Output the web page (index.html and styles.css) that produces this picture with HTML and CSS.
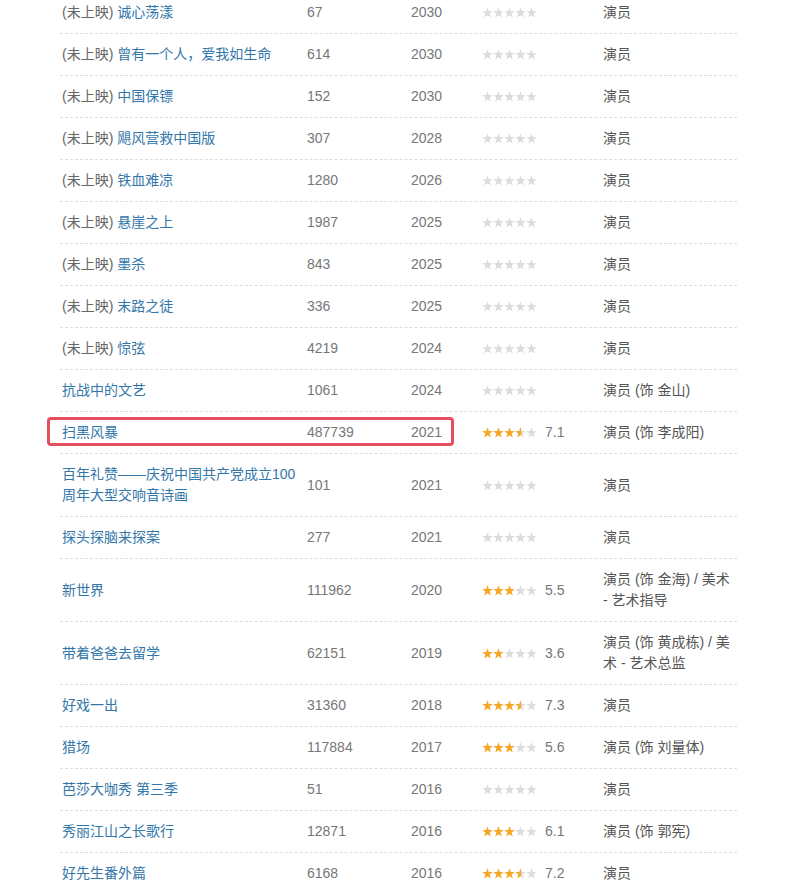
FILE: index.html
```html
<!DOCTYPE html>
<html lang="zh-CN">
<head>
<meta charset="utf-8">
<title>作品列表</title>
<link rel="stylesheet" href="styles.css">
</head>
<body>
<svg class="defs" width="0" height="0" aria-hidden="true">
  <defs>
    <symbol id="star" viewBox="0 0 11 11">
      <polygon points="5.5,0.3 6.8,4.1 10.8,4.2 7.6,6.6 8.8,10.5 5.5,8.2 2.2,10.5 3.4,6.6 0.2,4.2 4.2,4.1"/>
    </symbol>
    <linearGradient id="half" x1="0" x2="1" y1="0" y2="0">
      <stop offset="0.5" stop-color="#f6a623"/>
      <stop offset="0.5" stop-color="#dcdcdc"/>
    </linearGradient>
  </defs>
</svg>

<div class="works">
  <div class="row">
    <div class="c-title"><span class="pre">(未上映)</span> <a href="#">诚心荡漾</a></div>
    <div class="c-num">67</div><div class="c-year">2030</div>
    <div class="c-rate"><svg class="stars" width="55" height="11"><use href="#star" x="0" width="11" height="11" class="off"/><use href="#star" x="11" width="11" height="11" class="off"/><use href="#star" x="22" width="11" height="11" class="off"/><use href="#star" x="33" width="11" height="11" class="off"/><use href="#star" x="44" width="11" height="11" class="off"/></svg></div>
    <div class="c-role">演员</div>
  </div>
  <div class="row">
    <div class="c-title"><span class="pre">(未上映)</span> <a href="#">曾有一个人，爱我如生命</a></div>
    <div class="c-num">614</div><div class="c-year">2030</div>
    <div class="c-rate"><svg class="stars" width="55" height="11"><use href="#star" x="0" width="11" height="11" class="off"/><use href="#star" x="11" width="11" height="11" class="off"/><use href="#star" x="22" width="11" height="11" class="off"/><use href="#star" x="33" width="11" height="11" class="off"/><use href="#star" x="44" width="11" height="11" class="off"/></svg></div>
    <div class="c-role">演员</div>
  </div>
  <div class="row">
    <div class="c-title"><span class="pre">(未上映)</span> <a href="#">中国保镖</a></div>
    <div class="c-num">152</div><div class="c-year">2030</div>
    <div class="c-rate"><svg class="stars" width="55" height="11"><use href="#star" x="0" width="11" height="11" class="off"/><use href="#star" x="11" width="11" height="11" class="off"/><use href="#star" x="22" width="11" height="11" class="off"/><use href="#star" x="33" width="11" height="11" class="off"/><use href="#star" x="44" width="11" height="11" class="off"/></svg></div>
    <div class="c-role">演员</div>
  </div>
  <div class="row">
    <div class="c-title"><span class="pre">(未上映)</span> <a href="#">飓风营救中国版</a></div>
    <div class="c-num">307</div><div class="c-year">2028</div>
    <div class="c-rate"><svg class="stars" width="55" height="11"><use href="#star" x="0" width="11" height="11" class="off"/><use href="#star" x="11" width="11" height="11" class="off"/><use href="#star" x="22" width="11" height="11" class="off"/><use href="#star" x="33" width="11" height="11" class="off"/><use href="#star" x="44" width="11" height="11" class="off"/></svg></div>
    <div class="c-role">演员</div>
  </div>
  <div class="row">
    <div class="c-title"><span class="pre">(未上映)</span> <a href="#">铁血难凉</a></div>
    <div class="c-num">1280</div><div class="c-year">2026</div>
    <div class="c-rate"><svg class="stars" width="55" height="11"><use href="#star" x="0" width="11" height="11" class="off"/><use href="#star" x="11" width="11" height="11" class="off"/><use href="#star" x="22" width="11" height="11" class="off"/><use href="#star" x="33" width="11" height="11" class="off"/><use href="#star" x="44" width="11" height="11" class="off"/></svg></div>
    <div class="c-role">演员</div>
  </div>
  <div class="row">
    <div class="c-title"><span class="pre">(未上映)</span> <a href="#">悬崖之上</a></div>
    <div class="c-num">1987</div><div class="c-year">2025</div>
    <div class="c-rate"><svg class="stars" width="55" height="11"><use href="#star" x="0" width="11" height="11" class="off"/><use href="#star" x="11" width="11" height="11" class="off"/><use href="#star" x="22" width="11" height="11" class="off"/><use href="#star" x="33" width="11" height="11" class="off"/><use href="#star" x="44" width="11" height="11" class="off"/></svg></div>
    <div class="c-role">演员</div>
  </div>
  <div class="row">
    <div class="c-title"><span class="pre">(未上映)</span> <a href="#">墨杀</a></div>
    <div class="c-num">843</div><div class="c-year">2025</div>
    <div class="c-rate"><svg class="stars" width="55" height="11"><use href="#star" x="0" width="11" height="11" class="off"/><use href="#star" x="11" width="11" height="11" class="off"/><use href="#star" x="22" width="11" height="11" class="off"/><use href="#star" x="33" width="11" height="11" class="off"/><use href="#star" x="44" width="11" height="11" class="off"/></svg></div>
    <div class="c-role">演员</div>
  </div>
  <div class="row">
    <div class="c-title"><span class="pre">(未上映)</span> <a href="#">末路之徒</a></div>
    <div class="c-num">336</div><div class="c-year">2025</div>
    <div class="c-rate"><svg class="stars" width="55" height="11"><use href="#star" x="0" width="11" height="11" class="off"/><use href="#star" x="11" width="11" height="11" class="off"/><use href="#star" x="22" width="11" height="11" class="off"/><use href="#star" x="33" width="11" height="11" class="off"/><use href="#star" x="44" width="11" height="11" class="off"/></svg></div>
    <div class="c-role">演员</div>
  </div>
  <div class="row">
    <div class="c-title"><span class="pre">(未上映)</span> <a href="#">惊弦</a></div>
    <div class="c-num">4219</div><div class="c-year">2024</div>
    <div class="c-rate"><svg class="stars" width="55" height="11"><use href="#star" x="0" width="11" height="11" class="off"/><use href="#star" x="11" width="11" height="11" class="off"/><use href="#star" x="22" width="11" height="11" class="off"/><use href="#star" x="33" width="11" height="11" class="off"/><use href="#star" x="44" width="11" height="11" class="off"/></svg></div>
    <div class="c-role">演员</div>
  </div>
  <div class="row">
    <div class="c-title"><a href="#">抗战中的文艺</a></div>
    <div class="c-num">1061</div><div class="c-year">2024</div>
    <div class="c-rate"><svg class="stars" width="55" height="11"><use href="#star" x="0" width="11" height="11" class="off"/><use href="#star" x="11" width="11" height="11" class="off"/><use href="#star" x="22" width="11" height="11" class="off"/><use href="#star" x="33" width="11" height="11" class="off"/><use href="#star" x="44" width="11" height="11" class="off"/></svg></div>
    <div class="c-role">演员 (饰 金山)</div>
  </div>
  <div class="row marked">
    <div class="c-title"><a href="#">扫黑风暴</a></div>
    <div class="c-num">487739</div><div class="c-year">2021</div>
    <div class="c-rate"><svg class="stars" width="55" height="11"><use href="#star" x="0" width="11" height="11" class="on"/><use href="#star" x="11" width="11" height="11" class="on"/><use href="#star" x="22" width="11" height="11" class="on"/><use href="#star" x="33" width="11" height="11" class="half"/><use href="#star" x="44" width="11" height="11" class="off"/></svg><span class="score">7.1</span></div>
    <div class="c-role">演员 (饰 李成阳)</div>
    <div class="highlight"></div>
  </div>
  <div class="row">
    <div class="c-title"><a href="#">百年礼赞——庆祝中国共产党成立100周年大型交响音诗画</a></div>
    <div class="c-num">101</div><div class="c-year">2021</div>
    <div class="c-rate"><svg class="stars" width="55" height="11"><use href="#star" x="0" width="11" height="11" class="off"/><use href="#star" x="11" width="11" height="11" class="off"/><use href="#star" x="22" width="11" height="11" class="off"/><use href="#star" x="33" width="11" height="11" class="off"/><use href="#star" x="44" width="11" height="11" class="off"/></svg></div>
    <div class="c-role">演员</div>
  </div>
  <div class="row">
    <div class="c-title"><a href="#">探头探脑来探案</a></div>
    <div class="c-num">277</div><div class="c-year">2021</div>
    <div class="c-rate"><svg class="stars" width="55" height="11"><use href="#star" x="0" width="11" height="11" class="off"/><use href="#star" x="11" width="11" height="11" class="off"/><use href="#star" x="22" width="11" height="11" class="off"/><use href="#star" x="33" width="11" height="11" class="off"/><use href="#star" x="44" width="11" height="11" class="off"/></svg></div>
    <div class="c-role">演员</div>
  </div>
  <div class="row">
    <div class="c-title"><a href="#">新世界</a></div>
    <div class="c-num">111962</div><div class="c-year">2020</div>
    <div class="c-rate"><svg class="stars" width="55" height="11"><use href="#star" x="0" width="11" height="11" class="on"/><use href="#star" x="11" width="11" height="11" class="on"/><use href="#star" x="22" width="11" height="11" class="on"/><use href="#star" x="33" width="11" height="11" class="off"/><use href="#star" x="44" width="11" height="11" class="off"/></svg><span class="score">5.5</span></div>
    <div class="c-role">演员 (饰 金海) / 美术 - 艺术指导</div>
  </div>
  <div class="row">
    <div class="c-title"><a href="#">带着爸爸去留学</a></div>
    <div class="c-num">62151</div><div class="c-year">2019</div>
    <div class="c-rate"><svg class="stars" width="55" height="11"><use href="#star" x="0" width="11" height="11" class="on"/><use href="#star" x="11" width="11" height="11" class="on"/><use href="#star" x="22" width="11" height="11" class="off"/><use href="#star" x="33" width="11" height="11" class="off"/><use href="#star" x="44" width="11" height="11" class="off"/></svg><span class="score">3.6</span></div>
    <div class="c-role">演员 (饰 黄成栋) / 美术 - 艺术总监</div>
  </div>
  <div class="row">
    <div class="c-title"><a href="#">好戏一出</a></div>
    <div class="c-num">31360</div><div class="c-year">2018</div>
    <div class="c-rate"><svg class="stars" width="55" height="11"><use href="#star" x="0" width="11" height="11" class="on"/><use href="#star" x="11" width="11" height="11" class="on"/><use href="#star" x="22" width="11" height="11" class="on"/><use href="#star" x="33" width="11" height="11" class="half"/><use href="#star" x="44" width="11" height="11" class="off"/></svg><span class="score">7.3</span></div>
    <div class="c-role">演员</div>
  </div>
  <div class="row">
    <div class="c-title"><a href="#">猎场</a></div>
    <div class="c-num">117884</div><div class="c-year">2017</div>
    <div class="c-rate"><svg class="stars" width="55" height="11"><use href="#star" x="0" width="11" height="11" class="on"/><use href="#star" x="11" width="11" height="11" class="on"/><use href="#star" x="22" width="11" height="11" class="on"/><use href="#star" x="33" width="11" height="11" class="off"/><use href="#star" x="44" width="11" height="11" class="off"/></svg><span class="score">5.6</span></div>
    <div class="c-role">演员 (饰 刘量体)</div>
  </div>
  <div class="row">
    <div class="c-title"><a href="#">芭莎大咖秀 第三季</a></div>
    <div class="c-num">51</div><div class="c-year">2016</div>
    <div class="c-rate"><svg class="stars" width="55" height="11"><use href="#star" x="0" width="11" height="11" class="off"/><use href="#star" x="11" width="11" height="11" class="off"/><use href="#star" x="22" width="11" height="11" class="off"/><use href="#star" x="33" width="11" height="11" class="off"/><use href="#star" x="44" width="11" height="11" class="off"/></svg></div>
    <div class="c-role">演员</div>
  </div>
  <div class="row">
    <div class="c-title"><a href="#">秀丽江山之长歌行</a></div>
    <div class="c-num">12871</div><div class="c-year">2016</div>
    <div class="c-rate"><svg class="stars" width="55" height="11"><use href="#star" x="0" width="11" height="11" class="on"/><use href="#star" x="11" width="11" height="11" class="on"/><use href="#star" x="22" width="11" height="11" class="on"/><use href="#star" x="33" width="11" height="11" class="off"/><use href="#star" x="44" width="11" height="11" class="off"/></svg><span class="score">6.1</span></div>
    <div class="c-role">演员 (饰 郭宪)</div>
  </div>
  <div class="row">
    <div class="c-title"><a href="#">好先生番外篇</a></div>
    <div class="c-num">6168</div><div class="c-year">2016</div>
    <div class="c-rate"><svg class="stars" width="55" height="11"><use href="#star" x="0" width="11" height="11" class="on"/><use href="#star" x="11" width="11" height="11" class="on"/><use href="#star" x="22" width="11" height="11" class="on"/><use href="#star" x="33" width="11" height="11" class="half"/><use href="#star" x="44" width="11" height="11" class="off"/></svg><span class="score">7.2</span></div>
    <div class="c-role">演员</div>
  </div>
</div>
</body>
</html>
```

FILE: styles.css
```css
html, body {
  margin: 0;
  padding: 0;
  background: #fff;
}

body {
  font-family: "Liberation Sans", "Noto Sans CJK SC", sans-serif;
  font-size: 14px;
  line-height: 21px;
  color: #666;
  overflow: hidden;
}

.defs {
  position: absolute;
  width: 0;
  height: 0;
}

.works {
  width: 677px;
  margin: -8px 0 0 60px;
}

.row {
  display: grid;
  grid-template-columns: 245px 104px 71px 121px 136px;
  align-items: center;
  padding: 10px 0;
  border-bottom: 1px dashed #dddddd;
  position: relative;
}

.row > div {
  padding-left: 2px;
}

.c-title a {
  color: #3377aa;
  text-decoration: none;
}

.pre {
  color: #666;
}

.c-num,
.c-year {
  color: #777;
}

.c-rate {
  display: flex;
  align-items: center;
  gap: 8px;
}

.stars {
  display: block;
  flex: none;
}

.stars .on {
  fill: #f6a623;
}

.stars .off {
  fill: #dcdcdc;
}

.stars .half {
  fill: url(#half);
}

.score {
  color: #777;
}

.c-role {
  color: #555;
}

.highlight {
  position: absolute;
  left: -13px;
  top: 5px;
  width: 407px;
  height: 29px;
  box-sizing: border-box;
  border: 3px solid #e5505f;
  border-radius: 4px;
  padding: 0;
}
```
